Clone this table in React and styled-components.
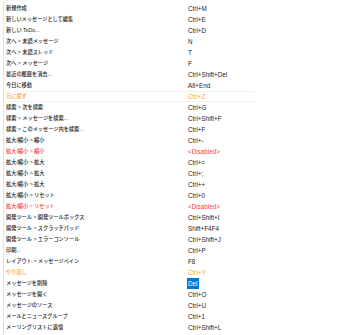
import React from 'react'
import styled, { createGlobalStyle } from 'styled-components'

const GlobalStyle = createGlobalStyle`
    html, body {
        margin: 0;
        padding: 0;
        background: #ffffff;
        overflow: hidden;
    }
`

const Page = styled.div`
    width: 340px;
    height: 335px;
    overflow: hidden;
    padding-left: 3px;
    box-sizing: border-box;
    font-family: "Liberation Sans", "Noto Sans CJK JP", sans-serif;
    font-size: 6.3px;
    color: #1c1c1c;
`

const List = styled.ul`
    list-style: none;
    margin: -8px 0 0 0;
    padding: 0;
    border-left: 1px solid #e2e2e2;
    height: 350px;
`

const Row = styled.li`
    display: grid;
    grid-template-columns: 182px 1fr;
    align-items: center;
    width: 250px;
    height: 11px;
    line-height: 11px;
    padding-left: 2px;
    box-sizing: border-box;
    white-space: nowrap;
    color: ${p => p.$tone === 'orange' ? '#f7a23c' : p.$tone === 'red' ? '#ff3b3b' : 'inherit'};
    box-shadow: ${p => p.$focus ? 'inset 0 1px 0 #f1f1f1, inset 0 -1px 0 #f1f1f1' : 'none'};
`

const Name = styled.span`
    overflow: hidden;
    font-size: 5.2px;
    font-weight: 500;
`

const Key = styled.span`
    justify-self: start;
    ${p => p.$selected && `
        background: #0078d7;
        color: #ffffff;
        padding: 0 2px 0 1px;
        margin-left: -1px;
    `}
`

const rows = [
    ['新規作成', 'Ctrl+N'],
    ['新規作成', 'Ctrl+M'],
    ['新しいメッセージとして編集', 'Ctrl+E'],
    ['新しい ToDo...', 'Ctrl+D'],
    ['次へ > 未読メッセージ', 'N'],
    ['次へ > 未読スレッド', 'T'],
    ['次へ > メッセージ', 'F'],
    ['最近の履歴を消去...', 'Ctrl+Shift+Del'],
    ['今日に移動', 'Alt+End'],
    ['元に戻す', 'Ctrl+Z', 'orange', true],
    ['検索 > 次を検索', 'Ctrl+G'],
    ['検索 > メッセージを検索...', 'Ctrl+Shift+F'],
    ['検索 > このメッセージ内を検索...', 'Ctrl+F'],
    ['拡大/縮小 > 縮小', 'Ctrl+-'],
    ['拡大/縮小 > 縮小', '<Disabled>', 'red'],
    ['拡大/縮小 > 拡大', 'Ctrl+='],
    ['拡大/縮小 > 拡大', 'Ctrl+;'],
    ['拡大/縮小 > 拡大', 'Ctrl++'],
    ['拡大/縮小 > リセット', 'Ctrl+0'],
    ['拡大/縮小 > リセット', '<Disabled>', 'red'],
    ['開発ツール > 開発ツールボックス', 'Ctrl+Shift+I'],
    ['開発ツール > スクラッチパッド', 'Shift+F4F4'],
    ['開発ツール > エラーコンソール', 'Ctrl+Shift+J'],
    ['印刷...', 'Ctrl+P'],
    ['レイアウト > メッセージペイン', 'F8'],
    ['やり直し', 'Ctrl+Y', 'orange'],
    ['メッセージを削除', 'Del', null, false, true],
    ['メッセージを開く', 'Ctrl+O'],
    ['メッセージのソース', 'Ctrl+U'],
    ['メールとニュースグループ', 'Ctrl+1'],
    ['メーリングリストに返信', 'Ctrl+Shift+L'],
]

export default function App() {
    return (
        <>
            <GlobalStyle />
            <Page>
                <List>
                    {rows.map(([name, key, tone, focus, selected], i) => (
                        <Row key={i} $tone={tone} $focus={focus}>
                            <Name>{name}</Name>
                            <Key $selected={selected}>{key}</Key>
                        </Row>
                    ))}
                </List>
            </Page>
        </>
    )
}
